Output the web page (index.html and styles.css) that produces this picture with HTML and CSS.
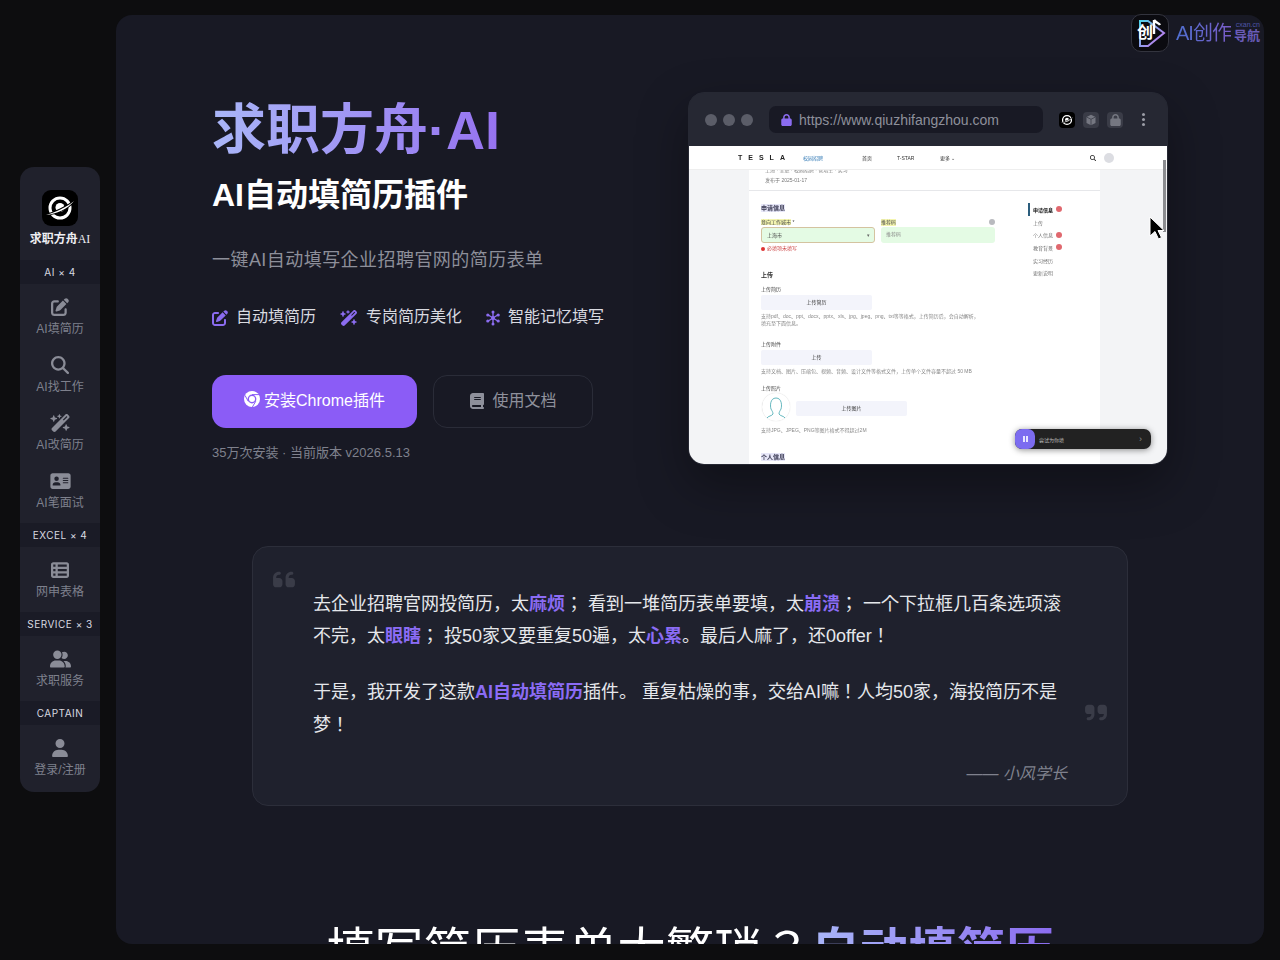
FILE: index.html
```html
<!DOCTYPE html>
<html lang="en">
<head>
    <meta charset="UTF-8">
    <meta name="viewport" content="width=device-width, initial-scale=1.0">
    <title>求职方舟AI</title>
    <link rel="stylesheet" href="styles.css">
</head>
<body>

<!-- Floating side nav -->
<div class="side-col">
    <nav class="sidebar">
        <div class="brand">
            <span class="brand-logo">
                <svg viewBox="0 0 36 36" width="36" height="36"><circle class="logo-ring" cx="18" cy="18" r="10"/><circle class="logo-dot" cx="18" cy="17.5" r="4.5"/><path class="logo-swoosh" d="M4 25C12 23 25 17 32 11C26 19 14 24 4 25z"/></svg>
            </span>
            <div class="brand-name">求职方舟<span class="brand-ai">AI</span></div>
        </div>

        <div class="nav-label">AI × 4</div>
        <div class="nav-group">
            <a class="nav-item"><svg class="nav-icon" viewBox="0 0 512 512"><path d="M471.6 21.7c-21.9-21.9-57.3-21.9-79.2 0L362.3 51.7l97.9 97.9 30.1-30.1c21.9-21.9 21.9-57.3 0-79.2L471.6 21.7zm-299.2 220c-6.1 6.1-10.8 13.6-13.5 21.9l-29.6 88.8c-2.9 8.6-.6 18.1 5.8 24.6s15.9 8.7 24.6 5.8l88.8-29.6c8.2-2.7 15.7-7.4 21.9-13.5L437.7 172.3 339.7 74.3 172.4 241.7zM96 64C43 64 0 107 0 160V416c0 53 43 96 96 96H352c53 0 96-43 96-96V320c0-17.7-14.3-32-32-32s-32 14.3-32 32v96c0 17.7-14.3 32-32 32H96c-17.7 0-32-14.3-32-32V160c0-17.7 14.3-32 32-32h96c17.7 0 32-14.3 32-32s-14.3-32-32-32H96z"/></svg>AI填简历</a>
            <a class="nav-item"><svg class="nav-icon" viewBox="0 0 512 512"><path d="M416 208c0 45.9-14.9 88.3-40 122.7L502.6 457.4c12.5 12.5 12.5 32.8 0 45.3s-32.8 12.5-45.3 0L330.7 376c-34.4 25.2-76.8 40-122.7 40C93.1 416 0 322.9 0 208S93.1 0 208 0S416 93.1 416 208zM208 352a144 144 0 1 0 0-288 144 144 0 1 0 0 288z"/></svg>AI找工作</a>
            <a class="nav-item"><svg class="nav-icon wide" viewBox="0 0 576 512"><path d="M234.7 42.7L197 56.8c-3 1.1-5 4-5 7.2s2 6.1 5 7.2l37.7 14.1L248.8 123c1.1 3 4 5 7.2 5s6.1-2 7.2-5l14.1-37.7L315 71.2c3-1.1 5-4 5-7.2s-2-6.1-5-7.2L277.3 42.7 263.2 5c-1.1-3-4-5-7.2-5s-6.1 2-7.2 5L234.7 42.7zM46.1 395.4c-18.7 18.7-18.7 49.1 0 67.9l34.6 34.6c18.7 18.7 49.1 18.7 67.9 0L529.9 116.5c18.7-18.7 18.7-49.1 0-67.9L495.3 14.1c-18.7-18.7-49.1-18.7-67.9 0L46.1 395.4zM484.6 82.6l-105 105-23.3-23.3 105-105 23.3 23.3zM7.5 117.2C3 118.9 0 123.2 0 128s3 9.1 7.5 10.8L64 160l21.2 56.5c1.7 4.5 6 7.5 10.8 7.5s9.1-3 10.8-7.5L128 160l56.5-21.2c4.5-1.7 7.5-6 7.5-10.8s-3-9.1-7.5-10.8L128 96 106.8 39.5C105.1 35 100.8 32 96 32s-9.1 3-10.8 7.5L64 96 7.5 117.2zm352 256c-4.5 1.7-7.5 6-7.5 10.8s3 9.1 7.5 10.8L416 416l21.2 56.5c1.7 4.5 6 7.5 10.8 7.5s9.1-3 10.8-7.5L480 416l56.5-21.2c4.5-1.7 7.5-6 7.5-10.8s-3-9.1-7.5-10.8L480 352l-21.2-56.5c-1.7-4.5-6-7.5-10.8-7.5s-9.1 3-10.8 7.5L416 352l-56.5 21.2z"/></svg>AI改简历</a>
            <a class="nav-item"><svg class="nav-icon wide" viewBox="0 0 576 512"><path d="M64 32C28.7 32 0 60.7 0 96V416c0 35.3 28.7 64 64 64H512c35.3 0 64-28.7 64-64V96c0-35.3-28.7-64-64-64H64zm80 256h64c44.2 0 80 35.8 80 80c0 8.8-7.2 16-16 16H80c-8.8 0-16-7.2-16-16c0-44.2 35.8-80 80-80zm-32-96a64 64 0 1 1 128 0 64 64 0 1 1 -128 0zm256-32H496c8.8 0 16 7.2 16 16s-7.2 16-16 16H368c-8.8 0-16-7.2-16-16s7.2-16 16-16zm0 64H496c8.8 0 16 7.2 16 16s-7.2 16-16 16H368c-8.8 0-16-7.2-16-16s7.2-16 16-16zm0 64H496c8.8 0 16 7.2 16 16s-7.2 16-16 16H368c-8.8 0-16-7.2-16-16s7.2-16 16-16z"/></svg>AI笔面试</a>
        </div>

        <div class="nav-label">EXCEL × 4</div>
        <div class="nav-group">
            <a class="nav-item"><svg class="nav-icon" viewBox="0 0 512 512"><path d="M0 96C0 60.7 28.7 32 64 32H448c35.3 0 64 28.7 64 64V416c0 35.3-28.7 64-64 64H64c-35.3 0-64-28.7-64-64V96zm64 0v64h64V96H64zm384 0H192v64H448V96zM64 224v64h64V224H64zm384 0H192v64H448V224zM64 352v64h64V352H64zm384 0H192v64H448V352z"/></svg>网申表格</a>
        </div>

        <div class="nav-label">SERVICE × 3</div>
        <div class="nav-group">
            <a class="nav-item"><svg class="nav-icon wide" viewBox="0 0 640 512"><path d="M96 128a128 128 0 1 1 256 0A128 128 0 1 1 96 128zM0 482.3C0 383.8 79.8 304 178.3 304h91.4C368.2 304 448 383.8 448 482.3c0 16.4-13.3 29.7-29.7 29.7H29.7C13.3 512 0 498.7 0 482.3zM609.3 512H471.4c5.4-9.4 8.6-20.3 8.6-32v-8c0-60.7-27.1-115.2-69.8-151.8c2.4-.1 4.7-.2 7.1-.2h61.4C567.8 320 640 392.2 640 481.3c0 17-13.8 30.7-30.7 30.7zM432 256c-31 0-59-12.6-79.3-32.9C372.4 196.5 384 163.6 384 128c0-26.8-6.6-52.1-18.3-74.3C384.3 40.1 407.2 32 432 32c61.9 0 112 50.1 112 112s-50.1 112-112 112z"/></svg>求职服务</a>
        </div>

        <div class="nav-label">CAPTAIN</div>
        <div class="nav-group last">
            <a class="nav-item"><svg class="nav-icon" viewBox="0 0 448 512"><path d="M224 256A128 128 0 1 0 224 0a128 128 0 1 0 0 256zm-45.7 48C79.8 304 0 383.8 0 482.3C0 498.7 13.3 512 29.7 512H418.3c16.4 0 29.7-13.3 29.7-29.7C448 383.8 368.2 304 269.7 304H178.3z"/></svg>登录/注册</a>
        </div>
    </nav>
</div>

<main class="panel">
    <section class="hero">
        <div class="hero-left">
            <h1 class="hero-title">求职方舟·AI</h1>
            <h2 class="hero-sub">AI自动填简历插件</h2>
            <p class="hero-desc">一键AI自动填写企业招聘官网的简历表单</p>
            <ul class="features">
                <li><svg class="feat-icon" viewBox="0 0 512 512"><path d="M471.6 21.7c-21.9-21.9-57.3-21.9-79.2 0L362.3 51.7l97.9 97.9 30.1-30.1c21.9-21.9 21.9-57.3 0-79.2L471.6 21.7zm-299.2 220c-6.1 6.1-10.8 13.6-13.5 21.9l-29.6 88.8c-2.9 8.6-.6 18.1 5.8 24.6s15.9 8.7 24.6 5.8l88.8-29.6c8.2-2.7 15.7-7.4 21.9-13.5L437.7 172.3 339.7 74.3 172.4 241.7zM96 64C43 64 0 107 0 160V416c0 53 43 96 96 96H352c53 0 96-43 96-96V320c0-17.7-14.3-32-32-32s-32 14.3-32 32v96c0 17.7-14.3 32-32 32H96c-17.7 0-32-14.3-32-32V160c0-17.7 14.3-32 32-32h96c17.7 0 32-14.3 32-32s-14.3-32-32-32H96z"/></svg>自动填简历</li>
                <li><svg class="feat-icon wide" viewBox="0 0 576 512"><path d="M234.7 42.7L197 56.8c-3 1.1-5 4-5 7.2s2 6.1 5 7.2l37.7 14.1L248.8 123c1.1 3 4 5 7.2 5s6.1-2 7.2-5l14.1-37.7L315 71.2c3-1.1 5-4 5-7.2s-2-6.1-5-7.2L277.3 42.7 263.2 5c-1.1-3-4-5-7.2-5s-6.1 2-7.2 5L234.7 42.7zM46.1 395.4c-18.7 18.7-18.7 49.1 0 67.9l34.6 34.6c18.7 18.7 49.1 18.7 67.9 0L529.9 116.5c18.7-18.7 18.7-49.1 0-67.9L495.3 14.1c-18.7-18.7-49.1-18.7-67.9 0L46.1 395.4zM484.6 82.6l-105 105-23.3-23.3 105-105 23.3 23.3zM7.5 117.2C3 118.9 0 123.2 0 128s3 9.1 7.5 10.8L64 160l21.2 56.5c1.7 4.5 6 7.5 10.8 7.5s9.1-3 10.8-7.5L128 160l56.5-21.2c4.5-1.7 7.5-6 7.5-10.8s-3-9.1-7.5-10.8L128 96 106.8 39.5C105.1 35 100.8 32 96 32s-9.1 3-10.8 7.5L64 96 7.5 117.2zm352 256c-4.5 1.7-7.5 6-7.5 10.8s3 9.1 7.5 10.8L416 416l21.2 56.5c1.7 4.5 6 7.5 10.8 7.5s9.1-3 10.8-7.5L480 416l56.5-21.2c4.5-1.7 7.5-6 7.5-10.8s-3-9.1-7.5-10.8L480 352l-21.2-56.5c-1.7-4.5-6-7.5-10.8-7.5s-9.1 3-10.8 7.5L416 352l-56.5 21.2z"/></svg>专岗简历美化</li>
                <li><svg class="feat-icon narrow" viewBox="0 0 14 16"><path class="hub-lines" d="M7 1v14M1.5 4.5l11 7M12.5 4.5l-11 7"/><circle class="hub-dot" cx="7" cy="2" r="1.5"/><circle class="hub-dot" cx="7" cy="14" r="1.5"/><circle class="hub-dot" cx="1.8" cy="5" r="1.6"/><circle class="hub-dot" cx="12.2" cy="5" r="1.6"/><circle class="hub-dot" cx="1.8" cy="11" r="1.6"/><circle class="hub-dot" cx="12.2" cy="11" r="1.6"/><circle class="hub-dot" cx="7" cy="8" r="2"/></svg>智能记忆填写</li>
            </ul>
            <div class="actions">
                <a class="btn btn-primary">
                    <svg class="btn-icon" viewBox="0 0 16 16"><circle cx="8" cy="8" r="8" fill="#fff"/><circle cx="8" cy="8" r="4.4" fill="#8b5cf6"/><circle cx="8" cy="8" r="3" fill="#fff"/><path d="M8 3.6h7M4.2 10.2L1 4.4M11.8 10.2L8.4 16" stroke="#8b5cf6" stroke-width="1" fill="none"/></svg>
                    安装Chrome插件
                </a>
                <a class="btn btn-ghost">
                    <svg class="btn-icon book" viewBox="0 0 448 512"><path d="M96 0C43 0 0 43 0 96V416c0 53 43 96 96 96H384h32c17.7 0 32-14.3 32-32s-14.3-32-32-32V384c17.7 0 32-14.3 32-32V32c0-17.7-14.3-32-32-32H384 96zm0 384H352v64H96c-17.7 0-32-14.3-32-32s14.3-32 32-32zm32-240c0-8.8 7.2-16 16-16H336c8.8 0 16 7.2 16 16s-7.2 16-16 16H144c-8.8 0-16-7.2-16-16zm16 48H336c8.8 0 16 7.2 16 16s-7.2 16-16 16H144c-8.8 0-16-7.2-16-16s7.2-16 16-16z"/></svg>
                    使用文档
                </a>
            </div>
            <p class="install-note">35万次安装 · 当前版本 v2026.5.13</p>
        </div>

        <!-- Fake browser window with the form shot -->
        <div class="browser">
            <div class="browser-bar">
                <div class="dots"><i></i><i></i><i></i></div>
                <div class="url-box">
                    <svg class="url-lock" viewBox="0 0 448 512"><path d="M144 144v48H304V144c0-44.2-35.8-80-80-80s-80 35.8-80 80zM80 192V144C80 64.5 144.5 0 224 0s144 64.5 144 144v48h16c35.3 0 64 28.7 64 64V448c0 35.3-28.7 64-64 64H64c-35.3 0-64-28.7-64-64V256c0-35.3 28.7-64 64-64H80z"/></svg>
                    https://www.qiuzhifangzhou.com
                </div>
                <div class="ext-icons">
                    <span class="ext ext-logo"><svg viewBox="0 0 36 36" width="16" height="16"><circle class="logo-ring" cx="18" cy="18" r="10"/><circle class="logo-dot" cx="18" cy="17.5" r="4.5"/><path class="logo-swoosh" d="M4 25C12 23 25 17 32 11C26 19 14 24 4 25z"/></svg></span>
                    <span class="ext"><svg viewBox="0 0 16 16" width="12" height="12"><path class="ext-shape" d="M8 1l6 3v8l-6 3-6-3V4z"/><path class="ext-cut" d="M2 4l6 3 6-3M8 7v8"/></svg></span>
                    <span class="ext"><svg viewBox="0 0 448 512" width="11" height="12"><path class="ext-shape" d="M144 144v48H304V144c0-44.2-35.8-80-80-80s-80 35.8-80 80zM80 192V144C80 64.5 144.5 0 224 0s144 64.5 144 144v48h16c35.3 0 64 28.7 64 64V448c0 35.3-28.7 64-64 64H64c-35.3 0-64-28.7-64-64V256c0-35.3 28.7-64 64-64H80z"/></svg></span>
                    <span class="kebab"><i></i><i></i><i></i></span>
                </div>
            </div>
            <div class="shot">
                <div class="shot-nav">
                    <span class="tesla">TESLA</span>
                    <span class="campus">校园招聘</span>
                    <span class="shot-link first">首页</span>
                    <span class="shot-link">T-STAR</span>
                    <span class="shot-link">更多 ⌄</span>
                    <svg class="shot-search" viewBox="0 0 512 512"><path d="M416 208c0 45.9-14.9 88.3-40 122.7L502.6 457.4c12.5 12.5 12.5 32.8 0 45.3s-32.8 12.5-45.3 0L330.7 376c-34.4 25.2-76.8 40-122.7 40C93.1 416 0 322.9 0 208S93.1 0 208 0S416 93.1 416 208zM208 352a144 144 0 1 0 0-288 144 144 0 1 0 0 288z"/></svg>
                    <span class="shot-avatar"></span>
                </div>
                <div class="shot-main">
                    <div class="shot-head">
                        <div class="cut-line">上海 · 全职 · 校园招聘 · 管培生 · 实习</div>
                        <div class="pub-date">发布于 2025-01-17</div>
                    </div>
                    <div class="shot-body">
                        <div class="shot-form">
                            <div class="sec-title">申请信息</div>
                            <div class="field-row">
                                <div class="field">
                                    <div class="field-label"><span class="mark">意向工作城市</span> *</div>
                                    <div class="fake-input select">上海市<span class="caret">▾</span></div>
                                    <div class="field-error"><i></i>必填项未填写</div>
                                </div>
                                <div class="field">
                                    <div class="field-label between"><span class="mark">推荐码</span><span class="info-dot"></span></div>
                                    <div class="fake-input hint">推荐码</div>
                                </div>
                            </div>
                            <div class="sub-title">上传</div>
                            <div class="up-label">上传简历</div>
                            <div class="up-btn">上传简历</div>
                            <div class="up-help">支持pdf、doc、ppt、docx、pptx、xls、jpg、jpeg、png、txt等等格式，上传简历后，会自动解析，<br>填充至下面信息。</div>
                            <div class="up-label gap">上传附件</div>
                            <div class="up-btn">上传</div>
                            <div class="up-help">支持文档、图片、压缩包、视频、音频、设计文件等格式文件，上传单个文件容量不超过 50 MB</div>
                            <div class="up-label gap-s">上传照片</div>
                            <div class="photo-row">
                                <span class="photo">
                                    <svg viewBox="0 0 28 28" width="28" height="28"><path class="photo-line" d="M5 25c1-2 5-2 6-4 0-2-1-3-2-5-1-3-1-11 5-11s6 8 5 11c-1 2-2 3-2 5 1 2 5 2 6 4"/></svg>
                                </span>
                                <div class="up-btn">上传图片</div>
                            </div>
                            <div class="up-help photo-help">支持JPG、JPEG、PNG等图片格式不得超过2M</div>
                            <div class="sec-title last">个人信息</div>
                        </div>
                        <ul class="shot-side">
                            <li class="on">申请信息<i></i></li>
                            <li>上传</li>
                            <li>个人信息<i></i></li>
                            <li>教育背景<i></i></li>
                            <li>实习经历</li>
                            <li>更新说明</li>
                        </ul>
                    </div>
                </div>
                <span class="shot-scroll"></span>
                <svg class="cursor" viewBox="0 0 16 24" width="16" height="24"><path d="M1 1v19l5-4.5 3.5 7.5 3-1.5-3.5-7H15z"/></svg>
                <div class="fill-pill">
                    <span class="pill-pause"><i></i><i></i></span>
                    <span class="pill-text">尝试为你填</span>
                    <span class="pill-arrow">›</span>
                </div>
            </div>
        </div>
    </section>

    <section class="story">
        <svg class="quote-mark open" viewBox="0 0 448 512"><path d="M0 216C0 149.7 53.7 96 120 96h8c17.7 0 32 14.3 32 32s-14.3 32-32 32h-8c-30.9 0-56 25.1-56 56v8h64c35.3 0 64 28.7 64 64v64c0 35.3-28.7 64-64 64H64c-35.3 0-64-28.7-64-64V216zm256 0c0-66.3 53.7-120 120-120h8c17.7 0 32 14.3 32 32s-14.3 32-32 32h-8c-30.9 0-56 25.1-56 56v8h64c35.3 0 64 28.7 64 64v64c0 35.3-28.7 64-64 64H320c-35.3 0-64-28.7-64-64V216z"/></svg>
        <p>去企业招聘官网投简历，太<b>麻烦</b>； 看到一堆简历表单要填，太<b>崩溃</b>； 一个下拉框几百条选项滚不完，太<b>眼瞎</b>； 投50家又要重复50遍，太<b>心累</b>。最后人麻了，还0offer！</p>
        <p>于是，我开发了这款<b>AI自动填简历</b>插件。 重复枯燥的事，交给AI嘛！人均50家，海投简历不是梦！</p>
        <svg class="quote-mark close" viewBox="0 0 448 512"><path d="M448 296c0 66.3-53.7 120-120 120h-8c-17.7 0-32-14.3-32-32s14.3-32 32-32h8c30.9 0 56-25.1 56-56v-8H320c-35.3 0-64-28.7-64-64V160c0-35.3 28.7-64 64-64h64c35.3 0 64 28.7 64 64v32 32 72zm-256 0c0 66.3-53.7 120-120 120H64c-17.7 0-32-14.3-32-32s14.3-32 32-32h8c30.9 0 56-25.1 56-56v-8H64c-35.3 0-64-28.7-64-64V160c0-35.3 28.7-64 64-64h64c35.3 0 64 28.7 64 64v32 32 72z"/></svg>
        <div class="story-author">—— 小风学长</div>
    </section>

    <h2 class="next-title">填写简历表单太繁琐？<span>自动填简历</span></h2>
</main>

<!-- Watermark, top right -->
<div class="watermark">
    <span class="wm-logo">
        <svg viewBox="0 0 36 36" width="36" height="36"><defs><linearGradient id="wmGrad" x1="0" y1="0" x2="1" y2="1"><stop offset="0" stop-color="#4fd1e8"/><stop offset="1" stop-color="#d46cf0"/></linearGradient></defs><path class="wm-tri" d="M8 6h8l16 12-16 13H8z"/><path class="wm-note" d="M22 5v14M22 5c2 3 5 3 6 5"/></svg>
        <span class="wm-char">创</span>
    </span>
    <span class="wm-name">AI创作</span>
    <span class="wm-side"><small>cxan.cn</small>导航</span>
</div>

</body>
</html>
```

FILE: styles.css
```css
* {
    margin: 0;
    padding: 0;
    box-sizing: border-box;
}

body {
    font-family: 'Liberation Sans', 'Noto Sans CJK KR', sans-serif;
    background: #0d0d0f;
    width: 1280px;
    height: 960px;
    overflow: hidden;
    display: flex;
    position: relative;
}

/* Side nav */
.side-col {
    width: 116px;
    flex: none;
    display: flex;
    align-items: center;
    padding-left: 20px;
    padding-bottom: 2px;
}

.sidebar {
    width: 80px;
    background: #20212c;
    border-radius: 14px;
    overflow: hidden;
}

.brand {
    height: 93px;
    padding-top: 23px;
    text-align: center;
}

.brand-logo {
    display: block;
    width: 36px;
    height: 36px;
    margin: 0 auto;
    background: #000;
    border-radius: 9px;
}

.logo-ring {
    fill: none;
    stroke: #fff;
    stroke-width: 3;
}

.logo-dot {
    fill: #fff;
}

.logo-swoosh {
    fill: #fff;
    stroke: #000;
    stroke-width: 2;
    paint-order: stroke;
}

.brand-name {
    margin-top: 5px;
    font-size: 12px;
    font-weight: 700;
    line-height: 16px;
    color: #eeeef2;
}

.brand-ai {
    font-family: 'Liberation Serif', serif;
    font-weight: 400;
}

.nav-label {
    height: 24px;
    line-height: 24px;
    background: #1a1b26;
    text-align: center;
    font-family: 'Inter', sans-serif;
    font-size: 10px;
    letter-spacing: 0.5px;
    color: #d8d9e0;
}

.nav-group {
    padding-bottom: 7px;
}

.nav-group.last {
    padding-bottom: 9px;
}

.nav-item {
    display: flex;
    flex-direction: column;
    align-items: center;
    height: 58px;
    padding-top: 14px;
    font-size: 12px;
    line-height: 16px;
    color: #7e808c;
}

.nav-icon {
    display: block;
    width: 18px;
    height: 18px;
    margin-bottom: 5px;
    fill: #8a8c97;
}

.nav-icon.wide {
    width: 21px;
}

/* Main panel */
.panel {
    width: 1148px;
    height: 929px;
    margin-top: 15px;
    background: #181924;
    border-radius: 16px;
    overflow: hidden;
}

.hero {
    display: flex;
    justify-content: space-between;
    padding: 77px 96px 0;
}

.hero-left {
    width: 440px;
}

.hero-title {
    font-size: 54px;
    line-height: 76px;
    font-weight: 700;
    background: linear-gradient(90deg, #a9b6f8, #9672f0);
    -webkit-background-clip: text;
    background-clip: text;
    color: transparent;
    display: inline-block;
}

.hero-sub {
    margin-top: 5px;
    font-size: 32px;
    line-height: 44px;
    font-weight: 700;
    color: #fff;
}

.hero-desc {
    margin-top: 30px;
    font-size: 18px;
    line-height: 26px;
    letter-spacing: 0.45px;
    color: #8d8f9a;
}

.features {
    display: flex;
    gap: 24px;
    list-style: none;
    margin-top: 32px;
    white-space: nowrap;
}

.features li {
    display: flex;
    align-items: center;
    gap: 8px;
    font-size: 16px;
    line-height: 24px;
    color: #d9dae0;
}

.feat-icon {
    width: 16px;
    height: 16px;
    fill: #8b6cf0;
    margin-top: 2px;
}

.feat-icon.wide {
    width: 18px;
}

.feat-icon.narrow {
    width: 14px;
}

.hub-lines {
    stroke: #8b6cf0;
    stroke-width: 1.4;
    fill: none;
}

.hub-dot {
    fill: #8b6cf0;
}

.actions {
    display: flex;
    gap: 16px;
    margin-top: 46px;
}

.btn {
    display: flex;
    align-items: center;
    justify-content: center;
    gap: 4px;
    height: 53px;
    padding-bottom: 5px;
    border-radius: 14px;
    font-size: 16px;
}

.btn-primary {
    width: 205px;
    background: #8b5cf6;
    color: #fff;
}

.btn-ghost {
    width: 160px;
    border: 1px solid #2a2c38;
    color: #8e909b;
    gap: 7px;
}

.btn-icon {
    width: 16px;
    height: 16px;
    fill: #8e909b;
}

.btn-icon.book {
    margin-top: 4px;
}

.install-note {
    margin-top: 15px;
    font-size: 13px;
    line-height: 20px;
    color: #7f818d;
}

/* Browser mock */
.browser {
    width: 480px;
    height: 373px;
    flex: none;
    border: 1px solid #262833;
    border-radius: 16px;
    overflow: hidden;
    background: #262833;
    box-shadow: 0 20px 50px rgba(0, 0, 0, 0.35);
}

.browser-bar {
    height: 53px;
    display: flex;
    align-items: center;
    padding: 0 16px;
}

.dots {
    display: flex;
    gap: 6px;
    width: 64px;
    flex: none;
}

.dots i {
    width: 12px;
    height: 12px;
    border-radius: 50%;
    background: #5b5d68;
}

.url-box {
    width: 274px;
    height: 27px;
    flex: none;
    display: flex;
    align-items: center;
    gap: 7px;
    padding-left: 12px;
    background: #181924;
    border-radius: 7px;
    font-size: 14px;
    color: #8e909b;
}

.url-lock {
    width: 11px;
    height: 12px;
    fill: #8b6cf0;
}

.ext-icons {
    display: flex;
    align-items: center;
    gap: 8px;
    margin-left: 16px;
}

.ext {
    width: 16px;
    height: 16px;
    display: flex;
    align-items: center;
    justify-content: center;
    border-radius: 4px;
    background: #3a3c47;
}

.ext-logo {
    background: #000;
}

.ext-shape {
    fill: #757781;
}

.ext-cut {
    fill: none;
    stroke: #3a3c47;
    stroke-width: 1;
}

.kebab {
    display: flex;
    flex-direction: column;
    gap: 2px;
    margin-left: 11px;
}

.kebab i {
    width: 3px;
    height: 3px;
    border-radius: 50%;
    background: #9a9ca6;
}

/* the reference shot is a scaled-down image, so it's a bit soft */
.shot {
    position: relative;
    height: 318px;
    background: #f3f4f6;
    overflow: hidden;
    font-size: 5px;
    color: #555;
}

.shot-nav {
    height: 24px;
    display: flex;
    align-items: center;
    background: #fff;
    padding-left: 49px;
    border-bottom: 1px solid #eee;
    filter: blur(0.3px);
}

.tesla {
    width: 53px;
    font-size: 7px;
    font-weight: 700;
    letter-spacing: 6px;
    color: #222;
}

.campus {
    width: 59px;
    margin-left: 12px;
    color: #3b7fb8;
}

.shot-link {
    width: 43px;
    color: #333;
}

.shot-link.first {
    width: 35px;
}

.shot-search {
    width: 6px;
    height: 6px;
    margin-left: 107px;
    fill: #222;
}

.shot-avatar {
    width: 10px;
    height: 10px;
    margin-left: 8px;
    border-radius: 50%;
    background: #dcdde2;
}

.shot-main {
    width: 351px;
    margin-left: 60px;
    background: #fff;
    height: 295px;
    filter: blur(0.3px);
}

.shot-head {
    height: 21px;
    padding-left: 16px;
    border-bottom: 1px solid #e6e7ea;
}

.cut-line {
    height: 3px;
    overflow: hidden;
    line-height: 0;
    color: #888;
}

.pub-date {
    margin-top: 3px;
    line-height: 8px;
    color: #777;
}

.shot-body {
    display: flex;
    padding-left: 12px;
}

.shot-form {
    width: 234px;
    flex: none;
}

.sec-title {
    margin-top: 13px;
    display: inline-block;
    font-size: 6px;
    line-height: 8px;
    font-weight: 700;
    color: #3a3a52;
    background: #e7e7f8;
}

.sec-title.last {
    margin-top: 19px;
}

.field-row {
    display: flex;
    gap: 6px;
    margin-top: 7px;
}

.field {
    width: 114px;
}

.field-label {
    height: 7px;
    line-height: 7px;
    color: #444;
}

.field-label.between {
    display: flex;
    justify-content: space-between;
}

.mark {
    background: #f4f5b0;
}

.info-dot {
    width: 6px;
    height: 6px;
    border-radius: 50%;
    background: #b9babf;
}

.fake-input {
    height: 16px;
    margin-top: 1px;
    padding-left: 5px;
    line-height: 15px;
    border-radius: 3px;
    background: #e4fbe4;
    color: #444;
}

.fake-input.select {
    display: flex;
    justify-content: space-between;
    padding-right: 4px;
    border: 1px solid #d4c3a0;
}

.fake-input.hint {
    color: #888;
}

.caret {
    color: #666;
}

.field-error {
    display: flex;
    align-items: center;
    gap: 2px;
    margin-top: 2px;
    line-height: 7px;
    color: #c44;
}

.field-error i {
    width: 4px;
    height: 4px;
    border-radius: 50%;
    background: #d33;
}

.sub-title {
    margin-top: 19px;
    font-size: 6px;
    line-height: 8px;
    font-weight: 700;
    color: #333;
}

.up-label {
    margin-top: 7px;
    line-height: 7px;
    color: #444;
}

.up-label.gap {
    margin-top: 14px;
}

.up-label.gap-s {
    margin-top: 10px;
}

.up-btn {
    width: 111px;
    height: 15px;
    margin-top: 2px;
    background: #f3f4fb;
    border-radius: 2px;
    text-align: center;
    line-height: 15px;
    color: #333;
}

.up-help {
    margin-top: 3px;
    font-size: 5px;
    line-height: 7px;
    color: #888;
    white-space: nowrap;
}

.photo-row {
    display: flex;
    align-items: center;
    gap: 6px;
    margin-left: 1px;
    margin-top: 1px;
}

.photo {
    width: 28px;
    height: 28px;
    border-radius: 50%;
    background: #fff;
    box-shadow: 0 0 1px #ccc;
}

.photo-line {
    fill: none;
    stroke: #3fa6ae;
    stroke-width: 0.8;
}

.photo-help {
    margin-top: 6px;
}

.shot-side {
    list-style: none;
    margin-left: 33px;
    margin-top: 12px;
}

.shot-side li {
    display: flex;
    align-items: center;
    gap: 3px;
    height: 12.7px;
    padding-left: 5px;
    color: #777;
}

.shot-side li.on {
    border-left: 2px solid #2b5d7d;
    padding-left: 3px;
    font-weight: 700;
    color: #111;
}

.shot-side i {
    width: 6px;
    height: 6px;
    border-radius: 50%;
    background: #e0686e;
}

.shot-scroll {
    position: absolute;
    right: 1px;
    top: 14px;
    width: 3px;
    height: 72px;
    background: #8b8c90;
}

.cursor {
    position: absolute;
    left: 460px;
    top: 70px;
    fill: #000;
    stroke: #fff;
    stroke-width: 1;
}

.fill-pill {
    position: absolute;
    left: 326px;
    top: 283px;
    width: 136px;
    height: 20px;
    display: flex;
    align-items: center;
    background: #222;
    border-radius: 7px;
    box-shadow: 0 1px 6px rgba(0, 0, 0, 0.45);
    color: #bbb;
}

.pill-pause {
    width: 20px;
    height: 20px;
    flex: none;
    display: flex;
    align-items: center;
    justify-content: center;
    gap: 1px;
    background: #7c6cf0;
    border-radius: 7px;
}

.pill-pause i {
    width: 2px;
    height: 6px;
    background: #e8e6ff;
}

.pill-text {
    margin-left: 4px;
}

.pill-arrow {
    margin-left: auto;
    margin-right: 9px;
    font-size: 9px;
    color: #888;
}

/* Quote card */
.story {
    position: relative;
    width: 876px;
    height: 260px;
    margin: 81px 0 0 136px;
    padding: 40.5px 60px 0;
    background: #1f212d;
    border: 1px solid #2c2e3a;
    border-radius: 16px;
    font-size: 18px;
    line-height: 32.4px;
    color: #e5e7eb;
}

.story p {
    margin-bottom: 24px;
}

.story b {
    color: #8b6cf5;
}

.quote-mark {
    position: absolute;
    width: 22px;
    height: 25px;
    fill: #3a3c48;
}

.quote-mark.open {
    left: 20px;
    top: 20px;
}

.quote-mark.close {
    right: 20px;
    top: 153px;
}

.story-author {
    margin-top: -7px;
    text-align: right;
    font-size: 16px;
    font-style: italic;
    color: #7f818d;
}

.next-title {
    margin-top: 115px;
    text-align: center;
    font-size: 48.5px;
    line-height: 60px;
    font-weight: 400;
    color: #fff;
    white-space: nowrap;
}

.next-title span {
    font-weight: 700;
    background: linear-gradient(90deg, #a9b6f8, #8b6cf0);
    -webkit-background-clip: text;
    background-clip: text;
    color: transparent;
}

/* Watermark */
.watermark {
    position: absolute;
    top: 14px;
    left: 1131px;
    display: flex;
    align-items: center;
    gap: 7px;
}

.wm-logo {
    position: relative;
    width: 38px;
    height: 38px;
    border-radius: 10px;
    background: #0b0b10;
    border: 1px solid #33343e;
}

.wm-tri {
    fill: none;
    stroke: url(#wmGrad);
    stroke-width: 2;
}

.wm-note {
    fill: none;
    stroke: #fff;
    stroke-width: 2.4;
}

.wm-char {
    position: absolute;
    left: 5px;
    top: 9px;
    font-size: 16px;
    line-height: 18px;
    font-weight: 700;
    color: #fff;
}

.wm-name {
    font-size: 20px;
    line-height: 24px;
    letter-spacing: -1px;
    background: linear-gradient(90deg, #4f6fd0, #7a5cc8);
    -webkit-background-clip: text;
    background-clip: text;
    color: transparent;
}

.wm-side {
    display: flex;
    flex-direction: column;
    align-items: flex-end;
    margin-left: -4px;
    margin-top: -3px;
    font-size: 13px;
    line-height: 13px;
    font-weight: 700;
    color: #6a5cb8;
}

.wm-side small {
    font-size: 7px;
    line-height: 8px;
    font-weight: 400;
    color: #4f55a8;
}
```
